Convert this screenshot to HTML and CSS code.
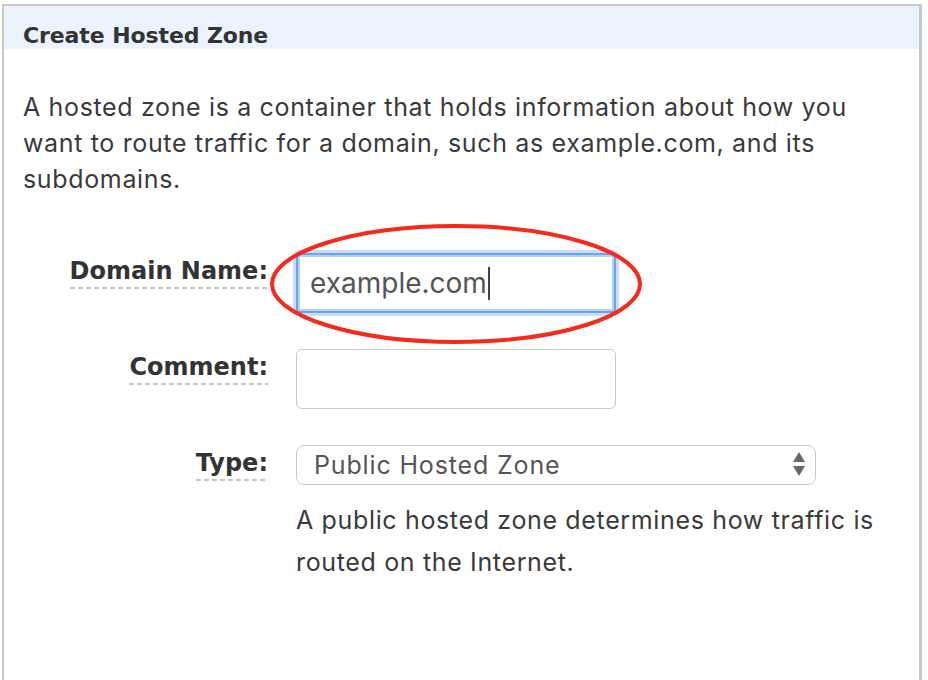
FILE: index.html
```html
<!DOCTYPE html>
<html lang="en">
<head>
<meta charset="utf-8">
<title>Create Hosted Zone</title>
<link rel="stylesheet" href="styles.css">
</head>
<body>
<div class="panel">
  <div class="panel-header">Create Hosted Zone</div>
  <div class="panel-body">
    <p class="intro">A hosted zone is a container that holds information about how you want to route traffic for a domain, such as example.com, and its subdomains.</p>
    <div class="form">
      <div class="lbl-cell"><span class="lbl">Domain Name:</span></div>
      <div class="ctrl">
        <div class="field field-focus"><span class="value">example.com</span><span class="caret"></span></div>
        <svg class="annot" width="380" height="128" viewBox="0 0 380 128"><ellipse cx="189" cy="63" rx="184" ry="58" fill="none" stroke="#f42a1c" stroke-width="4"/></svg>
      </div>
      <div class="lbl-cell"><span class="lbl">Comment:</span></div>
      <div class="ctrl">
        <div class="field"></div>
      </div>
      <div class="lbl-cell"><span class="lbl">Type:</span></div>
      <div class="ctrl">
        <div class="select"><span class="value">Public Hosted Zone</span>
          <svg class="arrows" width="12" height="26" viewBox="0 0 12 26"><path d="M6 0 L12 10 L0 10 Z M0 14 L12 14 L6 24 Z" fill="#666"/></svg>
        </div>
        <p class="help">A public hosted zone determines how traffic is routed on the Internet.</p>
      </div>
    </div>
  </div>
</div>
</body>
</html>
```
FILE: styles.css
```css
html, body { margin: 0; padding: 0; background: #fff; }
body { overflow: hidden; }

.panel {
  margin: 4px 0 0 2px;
  width: 920px;
  min-height: 720px;
  box-sizing: border-box;
  border: 2px solid #c9c9c9;
  border-right-width: 3px;
  border-bottom: none;
}

.panel-header {
  background: #eaf3fe;
  height: 43px;
  box-sizing: border-box;
  padding: 17px 0 0 19px;
  font-family: "DejaVu Sans", Verdana, sans-serif;
  font-weight: bold;
  font-size: 22px;
  line-height: 26px;
  color: #333;
  letter-spacing: -0.1px;
}

.panel-body {
  padding: 0 0 0 19px;
  font-family: Inter, "Liberation Sans", Arial, sans-serif;
  color: #3a3a3a;
}

.intro {
  margin: 40px 0 0 0;
  width: 880px;
  font-size: 25px;
  line-height: 36px;
  letter-spacing: 0.65px;
}

.form {
  margin-top: 56px;
  display: grid;
  grid-template-columns: 245px 520px;
  column-gap: 28px;
  row-gap: 36px;
}

.lbl-cell { text-align: right; }

.lbl {
  display: inline-block;
  padding-top: 3px;
  padding-bottom: 3px;
  font-family: "DejaVu Sans", Verdana, sans-serif;
  font-weight: bold;
  font-size: 24px;
  line-height: 30px;
  color: #333;
  background-image: repeating-linear-gradient(to right, #c4c4c4 0 5px, transparent 5px 8px);
  background-size: 100% 2px;
  background-repeat: no-repeat;
  background-position: left bottom;
}

.ctrl { position: relative; }

.field {
  width: 320px;
  height: 60px;
  box-sizing: border-box;
  border: 1px solid #c8c8c8;
  border-radius: 6px;
  background: #fff;
}

.field-focus {
  display: flex;
  align-items: center;
  padding-left: 12px;
  border: 2px solid #6aa4ec;
  border-radius: 3px;
  box-shadow: inset 0 0 0 2px #b3d1f6, 0 0 0 3px #c7ddf8;
  font-size: 28px;
  color: #555;
}

.caret {
  display: inline-block;
  width: 2px;
  height: 33px;
  margin-left: 1px;
  background: #444;
}

.annot {
  position: absolute;
  left: -29px;
  top: -32px;
  pointer-events: none;
}

.select {
  width: 520px;
  height: 40px;
  box-sizing: border-box;
  border: 1px solid #c8c8c8;
  border-radius: 8px;
  display: flex;
  align-items: center;
  justify-content: space-between;
  padding: 0 10px 0 17px;
  font-size: 25px;
  letter-spacing: 0.85px;
  color: #555;
}

.arrows { display: block; }

.help {
  margin: 14px 0 0 0;
  width: 600px;
  font-size: 25px;
  line-height: 42px;
  letter-spacing: 0.65px;
  color: #3a3a3a;
}
```
